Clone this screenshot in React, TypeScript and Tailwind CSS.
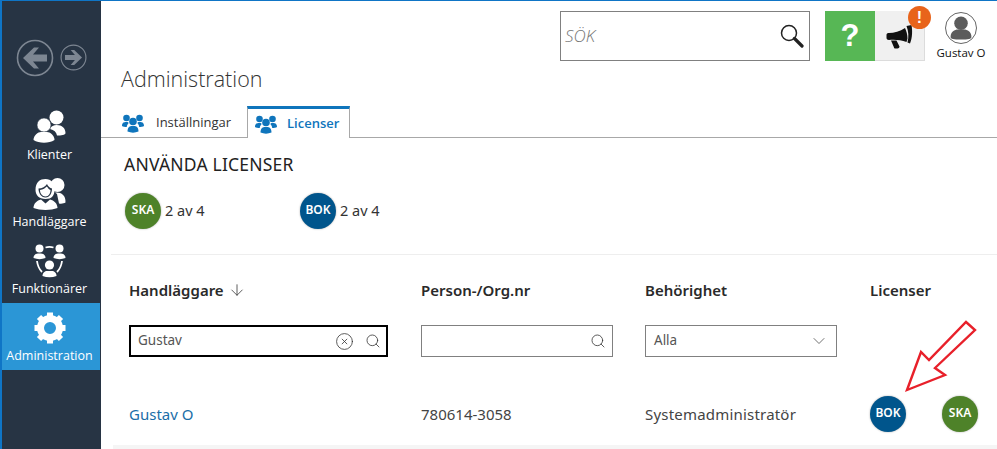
import { ChevronDown, Search, CircleX, ArrowDown } from "lucide-react";

const sans = "font-['Open_Sans','Liberation_Sans',sans-serif]";
const fira = "font-['Noto_Sans','Open_Sans',sans-serif]";

function Clients() {
  return (
    <svg width="34" height="34" viewBox="0 0 34 34" fill="white">
      <circle cx="23.5" cy="7.5" r="7" />
      <path d="M17 19 C18 16 21 15 23.5 15 C29 15 32.5 18 32.5 23 C32.5 25 28 25.5 24 25.5 C23.5 22 21 20 17 19 Z" />
      <circle cx="11" cy="15" r="7" stroke="#273444" strokeWidth="0.6" />
      <path d="M0.5 30 C0.5 25.5 5 22 8 22 L14 22 C17 22 21.5 25.5 21.5 30 C16 33.5 6 33.5 0.5 30 Z" />
    </svg>
  );
}

function Officers() {
  return (
    <svg width="34" height="34" viewBox="0 0 34 34" fill="white">
      <circle cx="24.5" cy="8" r="7" />
      <path d="M22 15.5 C28 15 33 18 32.5 25.5 C31 26.5 28.5 27 26 26.5 L24 17 Z" />
      <path d="M2.5 13 C2.5 5 7 2 12.5 2 C18 2 22.5 6 21.5 14 C21 18.5 19 22 12.5 22 C6 22 2.5 18 2.5 13 Z" />
      <path d="M5.5 11.5 C9 11.5 12.5 9.5 14 7 C15 9.5 17 11 19 11.5 C19 16 17 20.5 12.5 20.5 C8 20.5 5.5 16 5.5 11.5 Z" fill="#273444" />
      <path d="M7 13 C10 12.5 12.5 11 13.8 9.5 C15 11 16 12.5 17.5 13 C17.5 16.5 15.8 19.5 12.5 19.5 C9.2 19.5 7 16.5 7 13 Z" />
      <path d="M0.5 31 C0.5 26.5 4 23.5 8 22.5 L12.5 26.5 L17 22.5 C21 23.5 24.5 26.5 24.5 31 C18 33.5 7 33.5 0.5 31 Z" />
    </svg>
  );
}

function Staff() {
  return (
    <svg width="34" height="34" viewBox="0 0 34 34" fill="white">
      <circle cx="6.5" cy="4.5" r="4" />
      <path d="M0.5 14 C0.5 11 3 9.5 5 9.5 H8 C10 9.5 12.5 11 12.5 14 C9 15.5 4 15.5 0.5 14 Z" />
      <circle cx="26.5" cy="4.5" r="4" />
      <path d="M20.5 14 C20.5 11 23 9.5 25 9.5 H28 C30 9.5 32.5 11 32.5 14 C29 15.5 24 15.5 20.5 14 Z" />
      <circle cx="16.5" cy="21" r="4.6" />
      <path d="M9.5 32 C9.5 28.5 12 27 14 27 H19 C21 27 23.5 28.5 23.5 32 C19 33.6 14 33.6 9.5 32 Z" />
      <path d="M12.5 3.5 C15 2.8 18 2.8 20.5 3.5" fill="none" stroke="white" strokeWidth="1.8" />
      <path d="M4 17 C4.5 21 6 25 9 28 M29 17 C28.5 21 27 25 24 28" fill="none" stroke="white" strokeWidth="1.8" />
    </svg>
  );
}

function Gear() {
  return (
    <svg width="32" height="32" viewBox="0 0 32 32">
      <circle cx="16" cy="16" r="9.5" fill="none" stroke="white" strokeWidth="7" />
      <g stroke="white" strokeWidth="6">
        <path d="M16 0.5 V6 M16 26 V31.5 M0.5 16 H6 M26 16 H31.5 M5 5 L9 9 M23 23 L27 27 M5 27 L9 23 M23 9 L27 5" />
      </g>
    </svg>
  );
}

function NavArrow({ size, dir }: { size: number; dir: "l" | "r" }) {
  return (
    <svg width={size} height={size} viewBox="0 0 38 38">
      <circle cx="19" cy="19" r="17.5" fill="none" stroke="#7d8692" strokeWidth="1.6" />
      <path
        d={dir === "l" ? "M7 19 L18 8.5 H23 L17 15.5 H31 V22.5 H17 L23 29.5 H18 Z" : "M31 19 L20 8.5 H15 L21 15.5 H7 V22.5 H21 L15 29.5 H20 Z"}
        fill="#7d8692"
      />
    </svg>
  );
}

function TabIcon() {
  return (
    <svg width="22" height="20" viewBox="0 0 22 20" fill="#0f75bc">
      <circle cx="4.5" cy="5" r="3.3" />
      <circle cx="17.5" cy="5" r="3.3" />
      <path d="M0 13 C0 9.5 2 9 4 9 H5.5 C6.5 9 7 10 6 11 C5 12 4.8 13.5 4.8 14 C3 14 1 13.8 0 13 Z" />
      <path d="M22 13 C22 9.5 20 9 18 9 H16.5 C15.5 9 15 10 16 11 C17 12 17.2 13.5 17.2 14 C19 14 21 13.8 22 13 Z" />
      <circle cx="11" cy="8.5" r="3.8" />
      <path d="M5.5 18.5 C5.5 14 8 13 10 13 H12 C14 13 16.5 14 16.5 18.5 C13 20 9 20 5.5 18.5 Z" />
    </svg>
  );
}

function Horn() {
  return (
    <svg width="27" height="24" viewBox="0 0 27 24" fill="#111">
      <path d="M0.5 10 C0.5 8.5 1.5 8 3 8 C8 8 14 6.5 19 3 C20.5 6 21.5 10 21.5 13.5 L20.5 17 C15 15 9 14.5 3 15 C1.5 15 0.5 14 0.5 13 Z" />
      <path d="M5 15.5 L10.5 15.5 L13.5 21.5 C13.5 22.5 12.5 23.5 11.5 23.5 H9.5 C8.5 23.5 8 23 7.8 22 Z" />
      <path d="M20.5 1 L25.5 0 C26.5 5 26.5 13 24 18.5 L21.5 17.5 C23 12 22.5 6 20.5 1 Z" />
    </svg>
  );
}

function BigSearch() {
  return (
    <svg width="24" height="24" viewBox="0 0 24 24" fill="none">
      <circle cx="9" cy="9" r="7.5" stroke="#222" strokeWidth="1.5" />
      <path d="M14.5 14.5 L22 22" stroke="#222" strokeWidth="3.2" strokeLinecap="round" />
    </svg>
  );
}

function Badge({ label, color }: { label: string; color: string }) {
  return (
    <div
      className={`flex h-[36px] w-[36px] shrink-0 items-center justify-center rounded-full pb-[2px] text-[12px] font-semibold text-white shadow-[0_0_2px_rgba(0,0,0,0.35)] ${fira} ${color}`}
    >
      {label}
    </div>
  );
}

function NavItem({ label, icon, active }: { label: string; icon: React.ReactNode; active?: boolean }) {
  return (
    <div className={`flex h-[67px] flex-col items-center justify-start pr-[3px] pt-[8px] ${active ? "bg-[#2b96d6]" : ""}`}>
      <div className="flex h-[34px] items-center">{icon}</div>
      <span className={`mt-[2px] text-[12.5px] leading-[17px] text-white ${sans}`}>{label}</span>
    </div>
  );
}

export default function App() {
  return (
    <div className="relative flex h-[449px] w-[997px] overflow-hidden border-t border-[#0f75c6] bg-white">
      <aside className="flex w-[101px] shrink-0 flex-col border-l-2 border-[#0f75c6] bg-[#273444] pr-px">
        <div className="flex h-[101px] items-start gap-[6px] pl-[14px] pt-[38px]">
          <NavArrow size={38} dir="l" />
          <div className="pt-[5px]">
            <NavArrow size={27} dir="r" />
          </div>
        </div>
        <NavItem label="Klienter" icon={<Clients />} />
        <NavItem label="Handläggare" icon={<Officers />} />
        <NavItem label="Funktionärer" icon={<Staff />} />
        <NavItem label="Administration" icon={<Gear />} active />
      </aside>

      <main className="flex min-w-0 flex-1 flex-col">
        <header className="flex h-[60px] items-start justify-end pt-[10px]">
          <div className={`flex h-[50px] w-[250px] items-center justify-between border border-[#808080] pl-[4px] pr-[5px] ${sans}`}>
            <span className="text-[17px] font-light italic text-[#777]">SÖK</span>
            <BigSearch />
          </div>
          <div className="ml-[15px] flex h-[50px] w-[50px] items-center justify-center bg-[#57b755] font-['Liberation_Sans',sans-serif] text-[31px] font-bold text-white">
            ?
          </div>
          <div className="relative flex h-[50px] w-[50px] items-center justify-center border-b border-r border-[#dcdcdc] bg-[#f0f0f0] pt-[2px]">
            <Horn />
            <div className="absolute -top-[5px] right-[-7px] flex h-[23px] w-[23px] items-center justify-center rounded-full bg-[#e8641b] font-['Liberation_Sans',sans-serif] text-[16px] font-bold text-white">
              !
            </div>
          </div>
          <div className="flex w-[72px] flex-col items-center pt-[1px]">
            <div className="flex h-[32px] w-[32px] items-end justify-center rounded-full border border-[#666] pb-[3px]">
              <svg width="24" height="25" viewBox="0 0 22 24" fill="#5c5c5c">
                <circle cx="11" cy="8" r="6.5" />
                <path d="M1 21 C1 16 5 14 8 14 H14 C17 14 21 16 21 21 C21 23 18 23.5 11 23.5 C4 23.5 1 23 1 21 Z" />
              </svg>
            </div>
            <span className={`mt-[1px] text-[11.5px] font-medium leading-[16px] text-[#111] ${sans}`}>Gustav O</span>
          </div>
        </header>

        <h1 className={`pl-[20px] pt-[3px] text-[21.5px] font-light leading-[30px] text-[#333] ${sans}`}>Administration</h1>

        <div className={`mt-[12px] flex h-[32px] border-b border-[#a8a8a8] pl-[10px] ${sans}`}>
          <div className="flex w-[136px] items-center gap-[12px] pl-[11px] pt-[3px] text-[13px] text-[#333]">
            <TabIcon />
            Inställningar
          </div>
          <div className="mb-[-1px] flex h-[32px] w-[103px] items-center gap-[10px] border-x border-t-[3px] border-x-[#a8a8a8] border-t-[#0f75bc] bg-white pl-[7px] text-[13px] font-semibold text-[#0f75bc]">
            <TabIcon />
            Licenser
          </div>
        </div>

        <section className={`ml-[10px] border-b border-[#eeeeee] pb-[25px] pl-[13px] pt-[14px] ${fira}`}>
          <h2 className="text-[17.5px] leading-[24px] tracking-[0.2px] text-[#222]">ANVÄNDA LICENSER</h2>
          <div className="mt-[17px] flex">
            <div className="flex w-[176px] items-center gap-[4px] pl-[1px] text-[14.5px] text-[#333]">
              <Badge label="SKA" color="bg-[#4e8229]" />
              2 av 4
            </div>
            <div className="flex items-center gap-[4px] text-[14.5px] text-[#333]">
              <Badge label="BOK" color="bg-[#00558c]" />
              2 av 4
            </div>
          </div>
        </section>

        <div className={`ml-[12px] flex-1 border-b-[4px] border-[#f5f5f5] pl-[16px] ${fira}`}>
          <div className="grid grid-cols-[292px_224px_225px_1fr] pt-[24px] text-[15px] font-semibold leading-[22px] text-[#2a2a2a]">
            <div className="flex items-center gap-[4px]">
              Handläggare
              <ArrowDown size={18} strokeWidth={1} />
            </div>
            <div>Person-/Org.nr</div>
            <div>Behörighet</div>
            <div>Licenser</div>
          </div>

          <div className="mt-[24px] grid h-[32px] grid-cols-[292px_224px_225px_1fr] text-[13.5px] text-[#555]">
            <div className="flex h-[32px] w-[259px] items-center justify-between border-[2.5px] border-black pl-[7px] pr-[5px]">
              <span className="pb-[2px]">Gustav</span>
              <span className="flex items-center gap-[11px] text-[#333]">
                <CircleX size={19} strokeWidth={1} />
                <Search size={16} strokeWidth={1.2} />
              </span>
            </div>
            <div className="flex h-[32px] w-[192px] items-center justify-end border border-[#808080] pr-[6px] text-[#333]">
              <Search size={16} strokeWidth={1.2} />
            </div>
            <div className="flex h-[32px] w-[192px] items-center justify-between border border-[#808080] pl-[8px] pr-[7px]">
              <span className="pb-[2px]">Alla</span>
              <ChevronDown size={20} strokeWidth={1} />
            </div>
            <div />
          </div>

          <div className="mt-[39px] grid grid-cols-[292px_224px_225px_1fr] items-center text-[15px] text-[#444]">
            <div className="text-[#1a6ea8]">Gustav O</div>
            <div>780614-3058</div>
            <div className="tracking-[0.2px]">Systemadministratör</div>
            <div className="flex gap-[36px]">
              <Badge label="BOK" color="bg-[#00558c]" />
              <Badge label="SKA" color="bg-[#4e8229]" />
            </div>
          </div>
        </div>
      </main>

      <svg className="absolute left-[900px] top-[318px]" width="80" height="74" viewBox="0 0 80 74" fill="none">
        <path d="M66 3 L75 11 L35 49 L45 56 L7 71 L21 33 L29 41 Z" stroke="#e8202a" strokeWidth="2.4" fill="white" />
      </svg>
    </div>
  );
}
